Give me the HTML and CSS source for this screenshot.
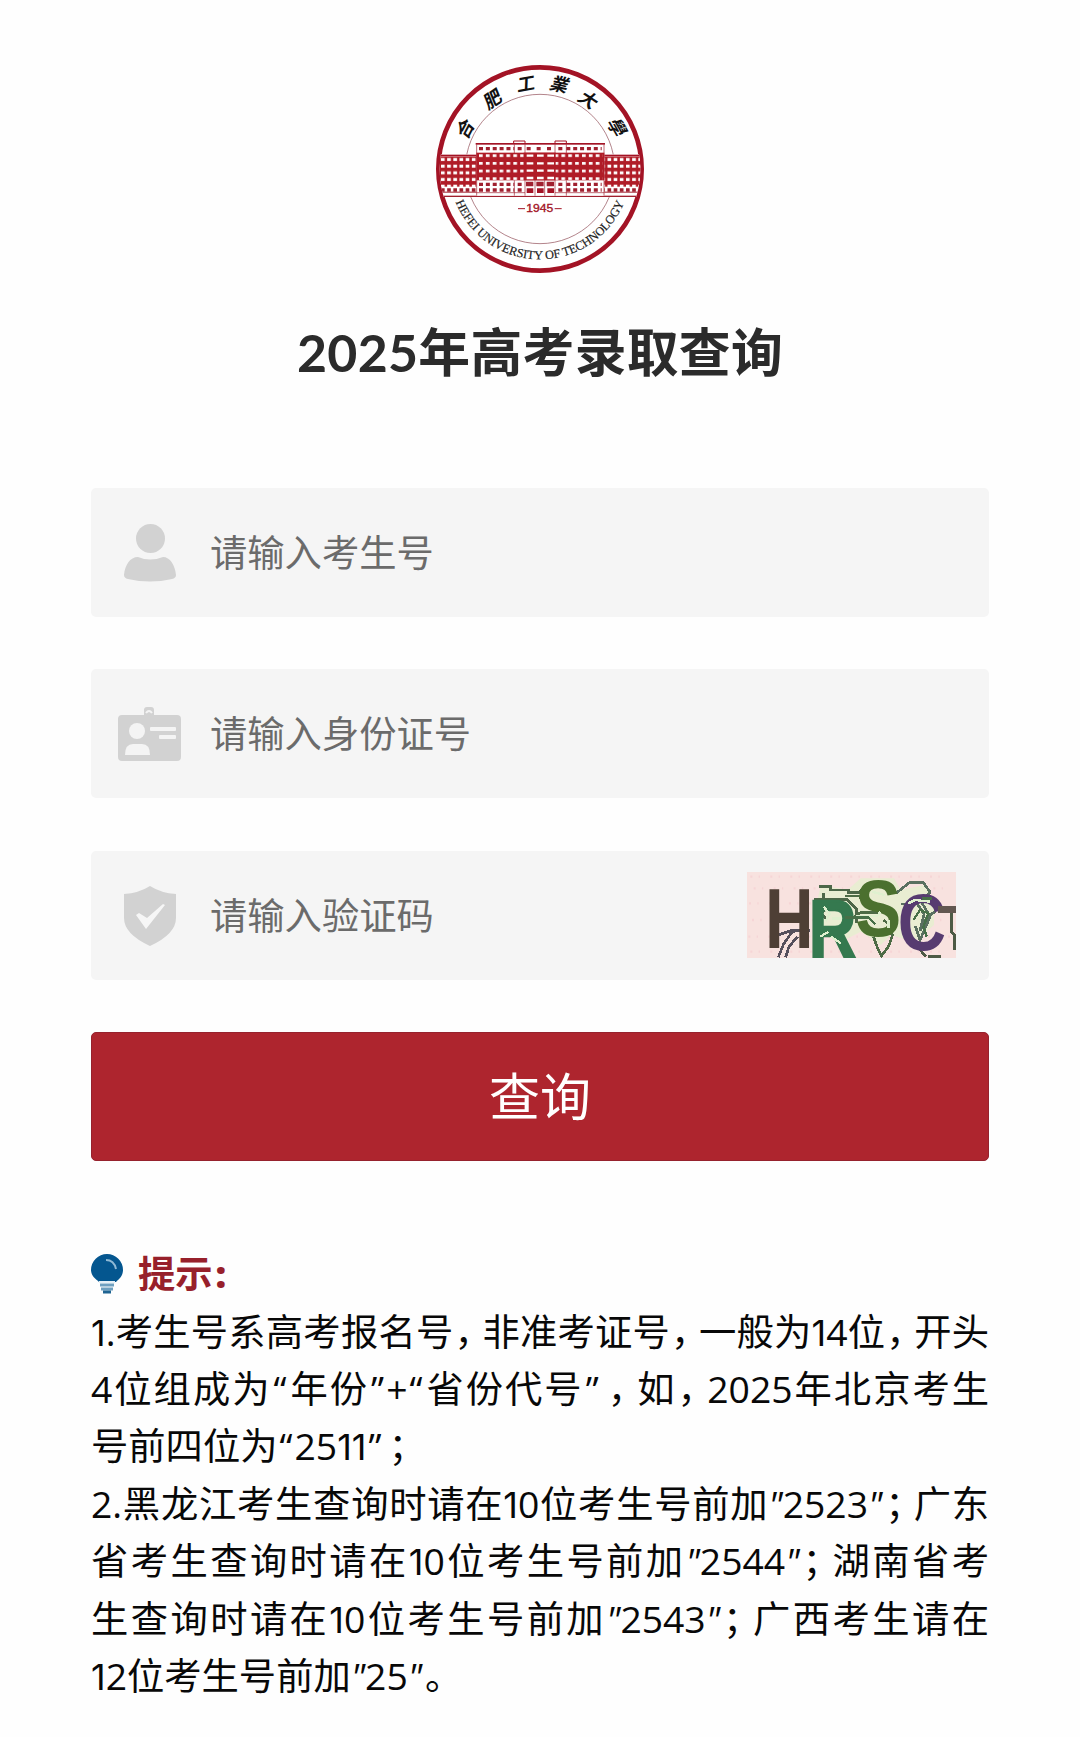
FILE: index.html
```html
<!DOCTYPE html>
<html lang="zh-CN">
<head>
  <meta charset="UTF-8" />
  <title>2025年高考录取查询</title>
  <link rel="stylesheet" href="styles.css">
</head>
<body>
  <svg class="logo" viewBox="0 0 690 690">
    <defs>
      <clipPath id="round"><circle cx="345" cy="342" r="301" /></clipPath>
      <path id="nameArc" d="M92 441 A272 272 0 0 0 598 441" />
      <pattern id="win" x="162" y="295" width="20.6" height="23" patternUnits="userSpaceOnUse">
        <rect width="20.6" height="23" fill="#b01c27" />
        <rect x="0" y="3" width="11" height="8" fill="#fff" />
      </pattern>
      <pattern id="winSide" x="48" y="304" width="18.5" height="20" patternUnits="userSpaceOnUse">
        <rect width="18.5" height="20" fill="#b01c27" />
        <rect x="0" y="5" width="11" height="9" fill="#fff" />
      </pattern>
    </defs>
    <circle cx="345" cy="342" r="305" fill="#fff" stroke="#a31325" stroke-width="14" />
    <circle cx="345" cy="342" r="224" fill="none" stroke="#8d4650" stroke-width="2" />
    <g clip-path="url(#round)">
      <rect x="30" y="298" width="630" height="128" fill="#fff" />
      <rect x="36" y="299" width="620" height="4" fill="#a31325" />
      <rect x="36" y="304" width="620" height="91" fill="url(#winSide)" />
      <g fill="#a0202f">
        <path d="M48 405h592" stroke="#a0202f" stroke-width="10" stroke-dasharray="11 7.5" />
        <rect x="36" y="410" width="620" height="3" />
        <rect x="36" y="422" width="620" height="4" />
      </g>
      <rect x="154" y="265" width="384" height="157" fill="#fff" />
      <path d="M266 266v-8h34v8M390 266v-8h34v8" fill="#fff" stroke="#a31325" stroke-width="3" />
      <rect x="152" y="264" width="388" height="5" fill="#a31325" />
      <path d="M155 268v154M537 268v154M268 268v28M300 268v28M390 268v28M424 268v28M268 376v46M300 376v46M390 376v46M424 376v46" stroke="#a0202f" stroke-width="2" />
      <path d="M162 281h106M278 281h14M305 281h20M335 281h20M366 281h20M400 281h14M424 281h106" stroke="#a0202f" stroke-width="10" stroke-dasharray="12 8.6" />
      <rect x="154" y="293" width="384" height="83" fill="#b01c27" />
      <rect x="162" y="295" width="370" height="80" fill="url(#win)" />
      <rect x="296" y="293" width="96" height="83" fill="#b01c27" />
      <path d="M305 302h82M305 325h82M305 347h82M305 369h82" stroke="#fff" stroke-width="7" stroke-dasharray="20 11" />
      <path d="M162 388h106M278 388h14M400 388h14M424 388h106M162 405h106M278 405h14M400 405h14M424 405h106" stroke="#a0202f" stroke-width="10" stroke-dasharray="12 8.6" />
      <path d="M303 387h84" stroke="#a0202f" stroke-width="14" stroke-dasharray="22 9" />
      <path d="M305 407h82" stroke="#a31325" stroke-width="14" stroke-dasharray="20 11" />
      <path d="M154 413h146M390 413h148" stroke="#a0202f" stroke-width="2" />
      <path d="M330 376v46M359 376v46" stroke="#a0202f" stroke-width="2" />
    </g>
    <g class="logo-cn">
      <text transform="translate(121 220) rotate(-62) skewX(-12)" y="20">合</text>
      <text transform="translate(204 132) rotate(-34) skewX(-12)" y="20">肥</text>
      <text transform="translate(304 88) rotate(-10) skewX(-12)" y="18">工</text>
      <text transform="translate(405 88) rotate(12) skewX(-12)" y="20">業</text>
      <text transform="translate(491 134) rotate(34) skewX(-12)" y="20">大</text>
      <text transform="translate(577 218) rotate(60) skewX(-12)" y="20">學</text>
    </g>
    <text class="logo-year" x="304" y="472" textLength="81" lengthAdjust="spacingAndGlyphs">1945</text>
    <path d="M279 461h21M389 461h21" stroke="#a31325" stroke-width="3" />
    <text class="logo-en"><textPath href="#nameArc" startOffset="0" textLength="648" lengthAdjust="spacing">HEFEI UNIVERSITY OF TECHNOLOGY</textPath></text>
  </svg>

  <h1>2025年高考录取查询</h1>

  <form class="form">
    <label class="field">
      <svg class="icon" viewBox="0 0 66 66">
        <circle cx="33.500" cy="18.500" r="14.500" />
        <path d="M21 37q12 5 25 0c7 0 12 8 13 18q0 3-4 4q-22 5-44 0q-4-1-4-4c1-10 6-18 14-18z" />
      </svg>
      <input type="text" placeholder="请输入考生号">
    </label>
    <label class="field">
      <svg class="icon" viewBox="0 0 66 66">
        <path d="M5 14h22V9q0-3 3-3h4q3 0 3 3v5h23q4 0 4 4v38q0 4-4 4H5q-4 0-4-4V18q0-4 4-4z" />
        <path d="M29 12q3-4 6 0" fill="none" stroke="#f4f4f4" stroke-width="2" />
        <g fill="#f4f4f4">
          <circle cx="20" cy="30" r="8" />
          <path d="M8 54q0-11 8-11h9q8 0 8 11z" />
          <rect x="33" y="26" width="26" height="4" rx="1" />
          <rect x="42" y="34" width="17" height="4" rx="1" />
        </g>
      </svg>
      <input type="text" placeholder="请输入身份证号">
    </label>
    <label class="field">
      <svg class="icon" viewBox="0 0 66 66">
        <path d="M33 4q11 7 26 8v24q0 16-26 28Q7 52 7 36V12q15-1 26-8z" />
        <path d="M19 33l3-2 8 5 16-14 2 1-19 24z" fill="#f6f6f6" />
      </svg>
      <input type="text" placeholder="请输入验证码">
      <svg class="captcha" viewBox="50 96 628 258" preserveAspectRatio="none">
        <rect x="50" y="96" width="628" height="258" fill="#f8e2df" />
        <path d="M60 110h600M70 145h590M56 190h600M65 240h580M54 290h610M60 335h600" stroke="#f6d5d6" stroke-width="7" stroke-dasharray="6 19 4 31" />
        <path d="M262 180l10-45 80 15 40-35h100l20 35 70-15 30 50v70l-60 50-70-20-30 30-60-40-60 30-70-50z" fill="#e9edd2" />
        <g fill="none" stroke-width="8" shape-rendering="crispEdges">
          <path d="M144 352l16-40 24-34 18-8M166 352l10-32 26-30M140 286l45-15h55" stroke="#554f5c" />
          <path d="M265 140h35v10h55v8h30l20-20M280 158v28l20 12-28 22 20 20M250 178h100l30 30v40" stroke="#4d6748" />
          <path d="M345 168h42l18 24M370 232l22-15h60M430 290l10 28 14 30 22-30 12-36M460 240l24 18v28" stroke="#4d6b45" />
          <path d="M498 160l40-32h42l20 28-12 16M512 192h50l20 30-12 50 20-40 26-18M565 170l35 60-30 70-14-42" stroke="#5a7060" />
          <path d="M570 330l18 20M595 350h38M664 220v55l10 10v45" stroke="#4d5a45" />
        </g>
        <g class="captcha-text">
          <text x="104" y="324" fill="#4e3f35" font-size="255" textLength="146" lengthAdjust="spacingAndGlyphs">H</text>
          <text x="236" y="350" fill="#35794f" stroke="#35794f" stroke-width="7" font-size="245" textLength="142" lengthAdjust="spacingAndGlyphs">R</text>
          <text x="375" y="288" fill="#4b702f" font-size="240" textLength="138" lengthAdjust="spacingAndGlyphs">S</text>
          <text x="503" y="331" fill="#573b70" font-size="240" textLength="145" lengthAdjust="spacingAndGlyphs">C</text>
        </g>
        <g fill="none" stroke-width="7" shape-rendering="crispEdges">
          <path d="M280 200l18 22-12 22M305 235h30M302 290l30 20M377 228h64l10-12" stroke="#dff0cf" />
          <path d="M425 155l38 10M475 240v24M535 190l20-10 45 5M270 290l25-15" stroke="#dff0cf" />
          <path d="M550 240l20-30 25 10-15 40 10 30M575 175h30M345 232h70l20 20" stroke="#477048" />
          <path d="M624 208h54" stroke="#625750" stroke-width="20" />
        </g>
      </svg>
    </label>
    <button type="button">查询</button>
  </form>

  <div class="tips">
    <div class="tips-title">
      <svg class="bulb" viewBox="0 0 32 40">
        <path d="M16 0a16 16 0 0 1 16 16c0 6-4 9-7 12H8c-3-3-8-6-8-12A16 16 0 0 1 16 0z" fill="#04568f" />
        <path d="M15 6q8 0 10 9" fill="none" stroke="#8fb9d5" stroke-width="2" />
        <rect x="8" y="27" width="16" height="2" fill="#e5f0f7" />
        <path d="M9 31h14M10 35h12" stroke="#6fa0c0" stroke-width="3" />
        <path d="M12 38h8" stroke="#1f6492" stroke-width="3" />
      </svg>
      <span>提示<b>:</b></span>
    </div>
    <p><em>1</em>.考生号系高考报名号<s>，</s>非准考证号<s>，</s>一般为<em>1</em>4位<s>，</s>开头</p>
    <p>4位组成为<u>“</u>年份<u>”</u>+<u>“</u>省份代号<u>”</u><s>，</s>如<s>，</s>2025年北京考生</p>
    <p class="last">号前四位为<u>“</u>25<em>11</em><u>”</u><s>；</s></p>
    <p>2.黑龙江考生查询时请在<em>1</em>0位考生号前加<i>"</i>2523<i>"</i><s>；</s>广东</p>
    <p>省考生查询时请在<em>1</em>0位考生号前加<i>"</i>2544<i>"</i><s>；</s>湖南省考</p>
    <p>生查询时请在<em>1</em>0位考生号前加<i>"</i>2543<i>"</i><s>；</s>广西考生请在</p>
    <p class="last"><em>1</em>2位考生号前加<i>"</i>25<i>"</i><s>。</s></p>
  </div>
</body>
</html>
```
FILE: styles.css
```css
* {
  box-sizing: border-box;
}

body {
  margin: 0;
  padding: 55px 91px 0;
  min-height: 1737px;
  background: #fefefe;
  font-family: "Open Sans", "Noto Sans CJK SC", sans-serif;
  font-size: 37.3px;
  color: #080808;
  display: flex;
  flex-direction: column;
  align-items: center;
}

.logo {
  width: 230px;
  height: 230px;
}

.logo-cn {
  font-family: "Noto Sans CJK TC", sans-serif;
  font-size: 54px;
  font-weight: 700;
  text-anchor: middle;
  fill: #111;
}

.logo-year {
  font-family: "Liberation Sans", sans-serif;
  font-size: 31px;
  fill: #a31325;
  stroke: #a31325;
}

.logo-en {
  font-family: "Liberation Serif", serif;
  font-size: 37px;
  fill: #222;
  stroke: #222;
  stroke-width: 0.5px;
}

h1 {
  margin: 31px 0 0;
  height: 72px;
  line-height: 72px;
  font-family: Lato, "Noto Sans CJK SC", sans-serif;
  font-size: 51.8px;
  font-weight: 700;
  letter-spacing: 0.3px;
  color: #2b2b2b;
  white-space: nowrap;
}

.form {
  width: 100%;
  margin-top: 100px;
  display: flex;
  flex-direction: column;
  gap: 52.4px;
}

.field {
  height: 129px;
  padding: 0 33px 0 26px;
  background: #f5f5f5;
  border-radius: 5px;
  display: flex;
  align-items: center;
}

.icon {
  width: 66px;
  height: 66px;
  margin-right: 27px;
  flex: none;
  fill: #d2d2d2;
}

input {
  flex: 1;
  min-width: 0;
  height: 100%;
  padding: 0 0 3px;
  border: none;
  outline: none;
  background: none;
  font: inherit;
  font-family: "Noto Sans CJK SC", sans-serif;
}

input::placeholder {
  color: #6b6b6b;
  opacity: 1;
}

.captcha {
  width: 209px;
  height: 86px;
  flex: none;
}

.captcha-text {
  font-family: "Liberation Sans", sans-serif;
  font-weight: 700;
}

button {
  height: 129px;
  padding: 0 0 5px;
  border: 1px solid #96222d;
  border-radius: 5px;
  background: #ae252e;
  color: #fff;
  font-family: "Noto Sans CJK SC", sans-serif;
  font-size: 51px;
}

.tips {
  width: 100%;
  margin-top: 84px;
}

.tips-title {
  height: 57.4px;
  display: flex;
  align-items: center;
  gap: 15px;
  line-height: 54px;
  font-weight: 700;
  color: #97202b;
}

.tips-title b {
  margin-left: 3px;
}

.bulb {
  width: 32px;
  height: 40px;
  flex: none;
}

.tips p {
  margin: 0;
  height: 57.4px;
  line-height: 57.4px;
  text-align: justify;
  text-align-last: justify;
  text-justify: inter-character;
  white-space: nowrap;
}

.tips .last {
  text-align-last: left;
}

/* half-width punctuation with a little air after it */
.tips s {
  text-decoration: none;
  font-feature-settings: "halt";
  margin: 0 9px 0 1px;
}

.tips u {
  text-decoration: none;
  margin: 0 2px;
}

.tips i + s {
  margin-left: 3px;
}

.tips u + s {
  margin-left: 5px;
}

/* narrow figure one */
.tips em {
  font-family: Inter, sans-serif;
  font-size: 36px;
  font-style: normal;
}
```
